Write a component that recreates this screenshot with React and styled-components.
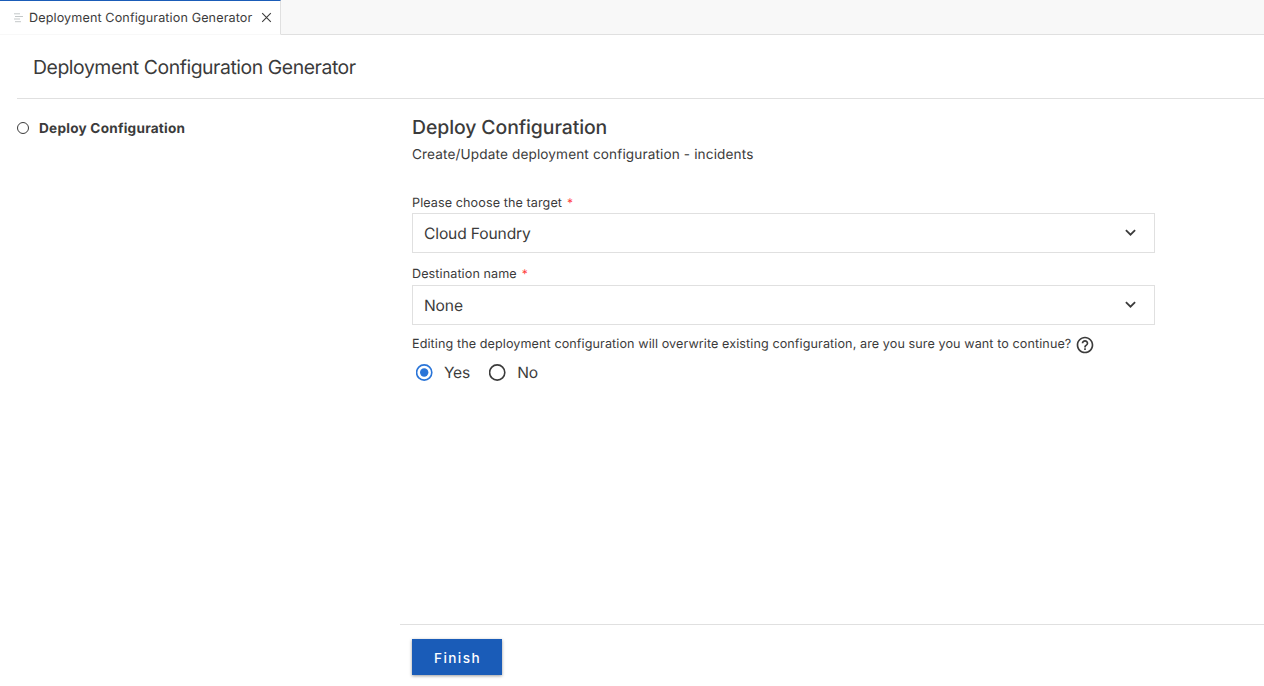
import React from "react";
import styled, { createGlobalStyle } from "styled-components";

const GlobalStyle = createGlobalStyle`
  * { box-sizing: border-box; }
  html, body { margin: 0; padding: 0; background: #fff; }
  body {
    font-family: Inter, "Liberation Sans", sans-serif;
    color: #3b3b3b;
    overflow: hidden;
    text-rendering: geometricPrecision;
  }
`;

const Window = styled.div`
  display: flex;
  flex-direction: column;
  width: 1264px;
  height: 686px;
  background: #fff;
`;

const TabBar = styled.div`
  display: flex;
  flex: none;
  height: 35px;
  background: #f8f8f8;
  border-bottom: 1px solid #e0e0e0;
`;

const Tab = styled.div`
  display: flex;
  align-items: center;
  width: 281px;
  height: 35px;
  padding: 0 8px 0 14px;
  background: #fff;
  border-top: 1px solid #1a5cb8;
  border-right: 1px solid #e0e0e0;
  border-bottom: 1px solid #f8f8f8;
`;

const TabTitle = styled.span`
  width: 223px;
  margin: 0 9px 0 6px;
  padding-top: 2px;
  font-size: 12.6px;
  line-height: 18px;
  letter-spacing: 0.12px;
  white-space: nowrap;
`;

const PageHeader = styled.header`
  flex: none;
  height: 64px;
  margin-left: 17px;
  padding: 18px 16px 0;
  border-bottom: 1px solid #e0e0e0;
`;

const PageTitle = styled.h1`
  margin: 0;
  font-size: 19.4px;
  font-weight: 400;
  line-height: 28px;
  letter-spacing: -0.44px;
`;

const Body = styled.div`
  display: flex;
  flex: 1;
  min-height: 0;
`;

const Steps = styled.nav`
  width: 400px;
  padding: 19px 17px;
`;

const Step = styled.div`
  display: flex;
  align-items: center;
  gap: 10px;
  height: 20px;
`;

const StepLabel = styled.span`
  padding-top: 2px;
  font-size: 13.6px;
  font-weight: 700;
  line-height: 18px;
  letter-spacing: 0.24px;
`;

const StepDot = styled.span`
  width: 12px;
  height: 12px;
  border: 1px solid #3b3b3b;
  border-radius: 50%;
`;

const Main = styled.main`
  display: flex;
  flex: 1;
  flex-direction: column;
`;

const Form = styled.section`
  flex: 1;
  width: 755px;
  padding: 14px 0 0 12px;
`;

const FormTitle = styled.h2`
  margin: 0;
  font-size: 19.4px;
  font-weight: 500;
  line-height: 28px;
  letter-spacing: -0.08px;
`;

const Description = styled.p`
  margin: 4px 0 28px;
  font-size: 13.6px;
  line-height: 20px;
  letter-spacing: 0.13px;
`;

const Field = styled.div`
  margin-bottom: ${(p) => p.$gap};
`;

const Label = styled.label`
  display: flex;
  align-items: center;
  height: 18px;
  padding-top: ${(p) => p.$drop || "3px"};
  font-size: 12.6px;
  line-height: 15px;
  letter-spacing: 0.09px;
  white-space: nowrap;
`;

const Required = styled.span`
  margin: -2px 0 0 5px;
  color: #ff3b3b;
  font-size: 12px;
`;

const Select = styled.div`
  display: flex;
  align-items: center;
  justify-content: space-between;
  height: 40px;
  margin-top: ${(p) => p.$offset};
  padding: 0 18px 0 11px;
  border: 1px solid #e0e0e0;
  font-size: 15.6px;
  letter-spacing: -0.14px;
`;

const Radios = styled.div`
  display: flex;
  align-items: center;
  gap: 19.5px;
  height: 20px;
  margin: 10px 0 0 4px;
`;

const Radio = styled.div`
  display: flex;
  align-items: center;
  gap: 11px;
`;

const RadioLabel = styled.span`
  padding-top: 2px;
  font-size: 15.6px;
  line-height: 20px;
  letter-spacing: -0.3px;
`;

const HelpSvg = styled.svg`
  flex: none;
  margin: 1px 0 0 4px;
`;

const Footer = styled.footer`
  flex: none;
  height: 62px;
  padding: 14px 12px;
  border-top: 1px solid #e0e0e0;
`;

const Button = styled.button`
  width: 90px;
  height: 36px;
  padding: 1px 0 0 1px;
  border: 0;
  background: #1a5cb8;
  color: #fff;
  box-shadow: 0 1px 3px rgba(0, 0, 0, 0.4);
  font-family: inherit;
  font-size: 13.6px;
  font-weight: 500;
  letter-spacing: 1.4px;
`;

const FileIcon = () => (
  <svg width="9" height="10" viewBox="0 0 9 10" fill="none" stroke="#c4c8c9">
    <path d="M0 .8h6M1 3.5h8M0 6h6M1 8.7h6" />
  </svg>
);

const CloseIcon = () => (
  <svg width="11" height="11" viewBox="0 0 11 11" fill="none" stroke="#3b3b3b" strokeWidth="1.1">
    <path d="M1.2 1.2l8.6 8.6M9.8 1.2L1.2 9.8" />
  </svg>
);

const Chevron = () => (
  <svg width="12" height="8" viewBox="0 0 12 8" fill="none" stroke="#3b3b3b" strokeWidth="1.8">
    <path d="M1.9 1.2l4.6 4.5 4.6-4.5" />
  </svg>
);

const RadioIcon = ({ checked }) => (
  <svg width="17" height="17" viewBox="0 0 17 17" fill="none">
    <circle cx="8.2" cy="8.5" r="7.6" stroke={checked ? "#2a75d8" : "#3b3b3b"} strokeWidth="1.6" />
    {checked && <circle cx="8.2" cy="8.5" r="4.2" fill="#2a75d8" />}
  </svg>
);

const HelpIcon = () => (
  <HelpSvg width="20" height="20" viewBox="0 0 24 24" fill="#3b3b3b">
    <path d="M11 18h2v-2h-2v2zm1-16C6.48 2 2 6.48 2 12s4.480 10 10 10 10-4.480 10-10S17.520 2 12 2zm0 18c-4.410 0-8-3.590-8-8s3.590-8 8-8 8 3.590 8 8-3.590 8-8 8zm0-14c-2.210 0-4 1.790-4 4h2c0-1.100.900-2 2-2s2 .900 2 2c0 2-3 1.750-3 5h2c0-2.250 3-2.500 3-5 0-2.210-1.790-4-4-4z" />
  </HelpSvg>
);

export default function App() {
  return (
    <Window>
      <GlobalStyle />
      <TabBar>
        <Tab>
          <FileIcon />
          <TabTitle>Deployment Configuration Generator</TabTitle>
          <CloseIcon />
        </Tab>
      </TabBar>
      <PageHeader>
        <PageTitle>Deployment Configuration Generator</PageTitle>
      </PageHeader>
      <Body>
        <Steps>
          <Step>
            <StepDot />
            <StepLabel>Deploy Configuration</StepLabel>
          </Step>
        </Steps>
        <Main>
          <Form>
            <FormTitle>Deploy Configuration</FormTitle>
            <Description>Create/Update deployment configuration - incidents</Description>
            <Field $gap="11px">
              <Label>
                Please choose the target<Required>*</Required>
              </Label>
              <Select $offset="2px">
                Cloud Foundry
                <Chevron />
              </Select>
            </Field>
            <Field $gap="9px">
              <Label>
                Destination name<Required>*</Required>
              </Label>
              <Select $offset="3px">
                None
                <Chevron />
              </Select>
            </Field>
            <Label>
              Editing the deployment configuration will overwrite existing configuration, are you sure you want to continue?
              <HelpIcon />
            </Label>
            <Radios>
              <Radio>
                <RadioIcon checked />
                <RadioLabel>Yes</RadioLabel>
              </Radio>
              <Radio>
                <RadioIcon />
                <RadioLabel>No</RadioLabel>
              </Radio>
            </Radios>
          </Form>
          <Footer>
            <Button>Finish</Button>
          </Footer>
        </Main>
      </Body>
    </Window>
  );
}
